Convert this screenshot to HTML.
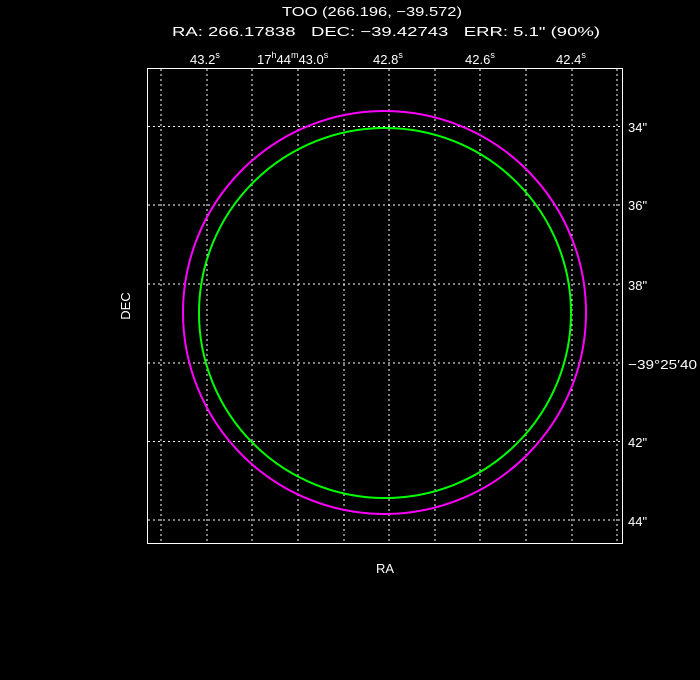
<!DOCTYPE html>
<html><head><meta charset="utf-8"><style>
html,body{margin:0;padding:0;background:#000;width:700px;height:680px;overflow:hidden}
svg{display:block}
text{font-family:"Liberation Sans","DejaVu Sans",sans-serif;fill:#fff;font-size:13px;white-space:pre}
</style></head><body>
<svg width="700" height="680" viewBox="0 0 700 680">
<text x="282" y="16" font-size="16" textLength="180" lengthAdjust="spacingAndGlyphs">TOO (266.196, −39.572)</text>
<text x="172" y="36" font-size="16" textLength="428" lengthAdjust="spacingAndGlyphs">RA: 266.17838   DEC: −39.42743   ERR: 5.1" (90%)</text>
<g stroke="#fff" stroke-width="1" stroke-dasharray="2 3" fill="none">
<line x1="161" y1="69" x2="161" y2="543"/>
<line x1="207" y1="69" x2="207" y2="543"/>
<line x1="252" y1="69" x2="252" y2="543"/>
<line x1="298" y1="69" x2="298" y2="543"/>
<line x1="344" y1="69" x2="344" y2="543"/>
<line x1="389" y1="69" x2="389" y2="543"/>
<line x1="435" y1="69" x2="435" y2="543"/>
<line x1="480" y1="69" x2="480" y2="543"/>
<line x1="526" y1="69" x2="526" y2="543"/>
<line x1="572" y1="69" x2="572" y2="543"/>
<line x1="617" y1="69" x2="617" y2="543"/>
<line x1="148" y1="126.5" x2="622" y2="126.5"/>
<line x1="148" y1="205" x2="622" y2="205"/>
<line x1="148" y1="284" x2="622" y2="284"/>
<line x1="148" y1="363" x2="622" y2="363"/>
<line x1="148" y1="441.5" x2="622" y2="441.5"/>
<line x1="148" y1="520" x2="622" y2="520"/>
</g>
<rect x="147.5" y="68.5" width="475" height="475" fill="none" stroke="#fff" stroke-width="1"/>
<ellipse cx="384.5" cy="312.5" rx="201.5" ry="201.5" fill="none" stroke="#ff00ff" stroke-width="2"/>
<ellipse cx="385" cy="313" rx="186" ry="185" fill="none" stroke="#00ff00" stroke-width="2"/>
<g font-size="12">
<text x="190" y="64">43.2<tspan font-size="9" dy="-6">s</tspan></text>
<text x="257" y="64">17<tspan font-size="9" dy="-6">h</tspan><tspan dy="6">44</tspan><tspan font-size="9" dy="-6">m</tspan><tspan dy="6">43.0</tspan><tspan font-size="9" dy="-6">s</tspan></text>
<text x="373" y="64">42.8<tspan font-size="9" dy="-6">s</tspan></text>
<text x="465" y="64">42.6<tspan font-size="9" dy="-6">s</tspan></text>
<text x="556" y="64">42.4<tspan font-size="9" dy="-6">s</tspan></text>
<text x="628" y="132">34"</text>
<text x="628" y="210">36"</text>
<text x="628" y="290">38"</text>
<text x="628" y="369" textLength="69" lengthAdjust="spacingAndGlyphs">−39°25′40</text>
<text x="628" y="447">42"</text>
<text x="628" y="526">44"</text>
</g>
<text x="385" y="573" text-anchor="middle" font-size="14">RA</text>
<text x="130" y="306" text-anchor="middle" font-size="14" transform="rotate(-90 130 306)">DEC</text>
</svg>
</body></html>
